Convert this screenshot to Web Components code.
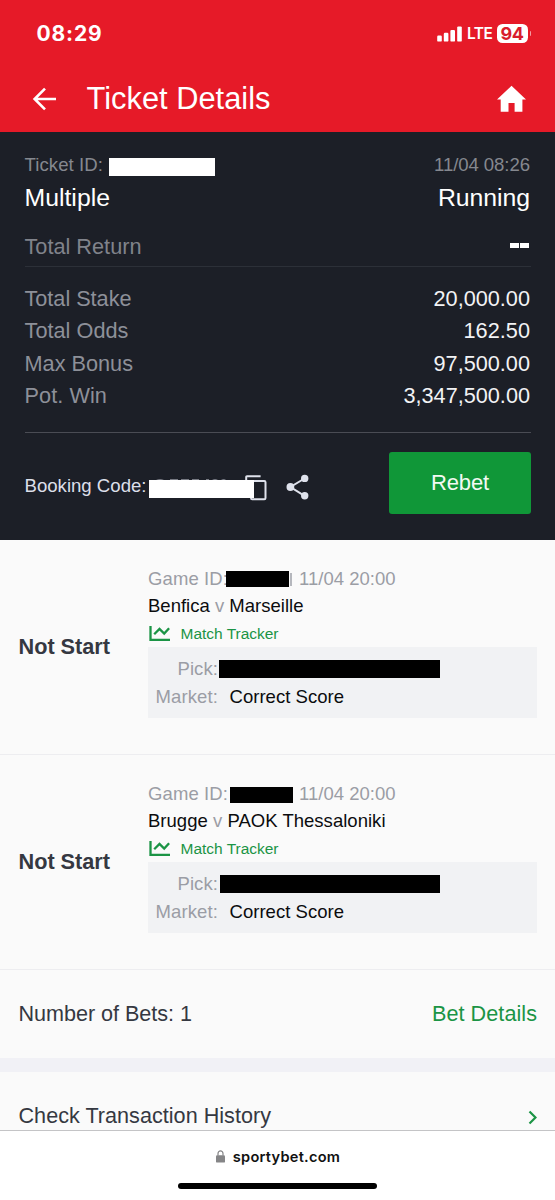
<!DOCTYPE html>
<html lang="en">
<head>
<meta charset="utf-8">
<title>Ticket Details</title>
<style>
html,body{margin:0;padding:0}
body{width:555px;height:1200px;overflow:hidden;background:#fafafa;font-family:"Liberation Sans",Arial,sans-serif}
</style>
</head>
<body>
<ticket-page></ticket-page>
<script>
function define(name, html, setup) {
  const t = document.createElement('template');
  t.innerHTML = html;
  customElements.define(name, class extends HTMLElement {
    connectedCallback() {
      if (this.shadowRoot) return;
      const root = this.attachShadow({mode: 'open'});
      root.appendChild(t.content.cloneNode(true));
      if (setup) setup(this, root);
    }
  });
}

// Single line of text tracked out to the width given in "w".
define('fit-text', `<style>
:host{display:inline-block;white-space:pre;flex:none;line-height:1}
span{display:inline-block}
</style><span><slot></slot></span>`, (el, root) => {
  const w = parseFloat(el.getAttribute('w'));
  const s = root.querySelector('span');
  const natural = s.getBoundingClientRect().width;
  s.style.letterSpacing = ((w - natural) / el.textContent.length).toFixed(3) + 'px';
  el.style.width = w + 'px';
});

// Redaction bar.
define('mask-bar', `<style>
:host{display:block;flex:none;position:relative;background:var(--bar,#000)}
</style>`);

define('status-bar', `<style>
:host{display:flex;height:67px;align-items:center;justify-content:space-between;padding:0 24px 0 36.5px;box-sizing:border-box;color:#fff;font-family:Inter,sans-serif}
.r{display:flex;align-items:center}
.t{font-size:21px;font-weight:700}
.l{font-size:15.5px;font-weight:600;margin:1px 0 0 4px}
.b{display:flex;align-items:center;justify-content:center;width:31px;height:19px;border-radius:5.5px;background:#fff;color:#d81c2c;font-size:18px;font-weight:700;margin-left:4px}
.n{width:1.5px;height:5px;border-radius:0 2px 2px 0;background:#f59aa0;margin-left:2px}
svg{display:block}
</style>
<fit-text class="t" w="66">08:29</fit-text>
<div class="r">
<svg width="26" height="16" viewBox="0 0 26 16" fill="#fff"><rect x="0.2" y="9.6" width="4.6" height="6" rx="1.2"/><rect x="6.8" y="6.8" width="4.6" height="8.8" rx="1.2"/><rect x="13.4" y="3.9" width="4.6" height="11.7" rx="1.2"/><rect x="20.2" y="0.4" width="4.6" height="15.2" rx="1.2"/></svg>
<fit-text class="l" w="25.5">LTE</fit-text>
<div class="b"><fit-text w="23">94</fit-text></div><div class="n"></div>
</div>`);

define('nav-bar', `<style>
:host{display:flex;height:65px;padding:0 28px 2px 32px;box-sizing:border-box;align-items:center;color:#fff;font-size:30.8px}
fit-text{margin:1px 0 0 29.5px}
.h{margin-left:auto}
svg{display:block}
</style>
<svg width="25" height="24" viewBox="0 0 25 24" fill="none" stroke="#fff" stroke-width="2.6"><path d="M13 1.6 2.6 12 13 22.4M2.6 12H24"/></svg>
<fit-text w="184">Ticket Details</fit-text>
<svg class="h" width="31" height="28" viewBox="0 0 31 28" fill="#fff"><path d="M15.5.8 30 14.6h-3.6v12.2h-7.8v-8.7h-6.1v8.7H4.7V14.6H1z"/></svg>`);

define('stat-row', `<style>
:host{display:flex;align-items:center;justify-content:space-between;height:32.3px;font-size:21.7px;color:#8d9099}
::slotted([slot=value]){color:#f2f3f5;margin-right:.5px}
</style><slot></slot><slot name="value"></slot>`);

define('app-button', `<style>
:host{display:flex;align-items:center;justify-content:center;width:142px;height:62px;border-radius:3px;background:#109738;color:#f3faf3;font-size:22px;box-sizing:border-box}
</style><slot></slot>`);

define('ticket-summary', `<style>
:host{display:block;height:408px;box-sizing:border-box;padding:17px 24.5px 0;background:#1c1f27}
.row{display:flex;align-items:center}
.id{height:32px;font-size:18.6px;color:#85888f}
.id mask-bar{--bar:#fff;width:106px;height:18px;margin:3px 0 0 6px}
.end{margin:0 .5px 0 auto}
.kind{height:34px;font-size:24.8px;color:#fff}
.ret{height:40px;margin-top:11px;font-size:21.7px;color:#80838b;border-bottom:1px solid #2c3038}
.ret fit-text{margin-top:1.5px}
.dash{display:flex;gap:1px;margin:0 1.5px 0 auto;padding-bottom:1px}
.dash i{width:9px;height:4.5px;background:#fff}
.stats{margin-top:15.7px}
.rule{height:1px;margin-top:20.1px;background:#4a4c54}
.book{height:62px;margin-top:19px;font-size:18.6px;color:#dcdfea;margin-right:-.5px}
.code{display:flex;position:relative;margin:12px 0 0 2.5px}
.code mask-bar{--bar:#fff;width:105px;height:18px;margin-top:5px}
.copy{display:block;margin-left:-9px}
.share{display:block;margin:9px 0 0 18px}
.book>fit-text{margin-top:7px}
.trace{position:absolute;left:5px;top:3px}
app-button{margin-left:auto}
app-button fit-text{margin-top:1px}
</style>
<div class="row id"><fit-text w="78.5">Ticket ID:</fit-text><mask-bar></mask-bar><fit-text class="end" w="96">11/04 08:26</fit-text></div>
<div class="row kind"><fit-text w="85.5">Multiple</fit-text><fit-text class="end" w="92">Running</fit-text></div>
<div class="row ret"><fit-text w="117">Total Return</fit-text><span class="dash"><i></i><i></i></span></div>
<div class="stats">
<stat-row><fit-text w="107">Total Stake</fit-text><fit-text slot="value" w="96.5">20,000.00</fit-text></stat-row>
<stat-row><fit-text w="104">Total Odds</fit-text><fit-text slot="value" w="66.5">162.50</fit-text></stat-row>
<stat-row><fit-text w="108.5">Max Bonus</fit-text><fit-text slot="value" w="96.5">97,500.00</fit-text></stat-row>
<stat-row><fit-text w="82.5">Pot. Win</fit-text><fit-text slot="value" w="126.5">3,347,500.00</fit-text></stat-row>
</div>
<div class="rule"></div>
<div class="row book"><fit-text w="122">Booking Code:</fit-text>
<div class="code"><mask-bar></mask-bar>
<svg class="copy" width="23" height="27" viewBox="0 0 23 27" fill="none" stroke="#dfe2ec" stroke-width="2"><path d="M1.2 6V1.8Q1.2 1.2 2 1.2h13.6"/><rect x="6" y="6" width="14.5" height="18.3" rx="1.2"/><path d="M0 5h9v18H0z" fill="#fff" stroke="none"/></svg>
<svg class="trace" width="72" height="2" fill="#777a83"><path d="M2 2q4-2 8 0zM16 1h8v1h-8zM27 1h8v1h-8zM38 1h7v1h-7zM52 1h3v1h-3zM58 2q3-2 6 0zM67 2q3-2 5 0z"/></svg></div>
<svg class="share" width="24" height="26" viewBox="0 0 24 26" fill="#dfe2ec"><path d="M18.5 4.5 4.5 13l14 8.8" fill="none" stroke="#dfe2ec" stroke-width="2"/><circle cx="18.7" cy="4.4" r="3.7"/><circle cx="4.4" cy="13" r="3.9"/><circle cx="18.7" cy="21.8" r="3.7"/></svg>
<app-button><fit-text w="58">Rebet</fit-text></app-button></div>`);

define('match-card', `<style>
:host{display:flex;height:215px;box-sizing:border-box;padding:26px 18px 0;border-bottom:1px solid #ededf0;background:#fafafa;font-size:18.5px}
.state{width:130px;height:161px;display:flex;align-items:center;font-size:21.7px;font-weight:700;color:#353841}
.state fit-text{margin-left:.5px}
.main{flex:1}
.row{display:flex;align-items:center;color:#9b9da5}
.game{height:26px}
.teams{height:28px;color:#0b0c0e}
.track{height:27px;font-size:15.5px;color:#1b9445}
.track svg{margin:0 9.5px 0 1px}
.box{width:389px;height:71px;box-sizing:border-box;padding:8px 0 0;background:#f1f2f4}
.box .row{height:28.5px}
.box .row+.row{margin-top:-.8px}
.lab{width:70px;display:flex;justify-content:flex-end}
.pick{width:220.5px;height:18px;margin:0 0 0 var(--pick-gap,1px)}
.gid{width:63px;height:16px;margin:var(--gid-top,0) 0 0 var(--gid-gap,0)}
.stub{width:1.5px;height:13px;background:#b5b7bd;margin-left:1.5px;visibility:var(--stub,hidden)}
.date{margin-left:auto;margin-right:141.5px}
</style>
<div class="state"><fit-text w="91.5">Not Start</fit-text></div>
<div class="main">
<div class="row game"><fit-text w="80">Game ID:</fit-text><mask-bar class="gid"></mask-bar><i class="stub"></i><fit-text class="date" w="96.5">11/04 20:00</fit-text></div>
<div class="row teams"><slot></slot></div>
<div class="row track"><svg width="22" height="17" viewBox="0 0 22 17" fill="none" stroke="#1b9445" stroke-width="2.3"><path d="M1.5 1v13.8H21M5.2 9.3l5.3-5.4 4.7 4.7 4.9-5.4"/></svg><fit-text w="98">Match Tracker</fit-text></div>
<div class="box">
<div class="row"><span class="lab"><fit-text w="40.5">Pick:</fit-text></span><mask-bar class="pick"></mask-bar></div>
<div class="row"><span class="lab"><fit-text w="62.5">Market:</fit-text></span><fit-text style="margin-left:11.5px;color:#0b0c0e" w="114.5">Correct Score</fit-text></div>
</div>
</div>`);

define('list-row', `<style>
:host{display:flex;align-items:center;justify-content:space-between;padding:0 18px 0 18.5px;background:#fafafa;font-size:21.6px;color:#353841;box-sizing:border-box}
</style><slot></slot>`);

define('browser-bar', `<style>
:host{display:block;height:70px;background:#fff;border-top:1px solid #c4c4c6;box-sizing:border-box;position:relative}
.url{display:flex;align-items:center;justify-content:center;height:51.5px;font:600 14.6px Inter,sans-serif;color:#111}
.url fit-text{margin-top:1px}
svg{margin:0 8px 0 1px}
.home{width:198.5px;height:6.5px;border-radius:4px;background:#000;margin:0 auto}
</style>
<div class="url"><svg width="9" height="13" viewBox="0 0 9 13"><rect x="0" y="5.2" width="9" height="7.4" rx="1.2" fill="#858587"/><path d="M2 5.5V3.4a2.5 2.5 0 0 1 5 0v2.1" fill="none" stroke="#858587" stroke-width="1.2"/></svg><fit-text w="107.5">sportybet.com</fit-text></div>
<div class="home"></div>`);

define('ticket-page', `<style>
:host{display:flex;flex-direction:column;width:555px;height:1200px;overflow:hidden;background:#fafafa}
:host>*{flex:none}
.top{background:#e61a28}
.gap{height:14px;background:#f1f1f6}
.v{color:#9b9da5}
.first{--gid-gap:-2.5px;--gid-top:0px;--stub:visible}
.second{--gid-gap:1.5px;--gid-top:1px;--pick-gap:1.5px}
.green{color:#1b9445}
.bets{height:88px;padding-bottom:1px}
.hist{height:58px;padding-top:29.5px;overflow:visible}
.hist svg{margin-top:3px}
</style>
<div class="top"><status-bar></status-bar><nav-bar></nav-bar></div>
<ticket-summary></ticket-summary>
<match-card class="first"><fit-text w="155.5">Benfica <span class="v">v</span> Marseille</fit-text></match-card>
<match-card class="second"><fit-text w="237.5">Brugge <span class="v">v</span> PAOK Thessaloniki</fit-text></match-card>
<list-row class="bets"><fit-text w="173.5">Number of Bets: 1</fit-text><fit-text class="green" w="105">Bet Details</fit-text></list-row>
<div class="gap"></div>
<list-row class="hist"><fit-text w="252.5">Check Transaction History</fit-text><svg width="10" height="15" viewBox="0 0 10 15" fill="none" stroke="#1b9445" stroke-width="2.2"><path d="m2.5 1.5 6 6-6 6"/></svg></list-row>
<browser-bar></browser-bar>`);
</script>
</body>
</html>
